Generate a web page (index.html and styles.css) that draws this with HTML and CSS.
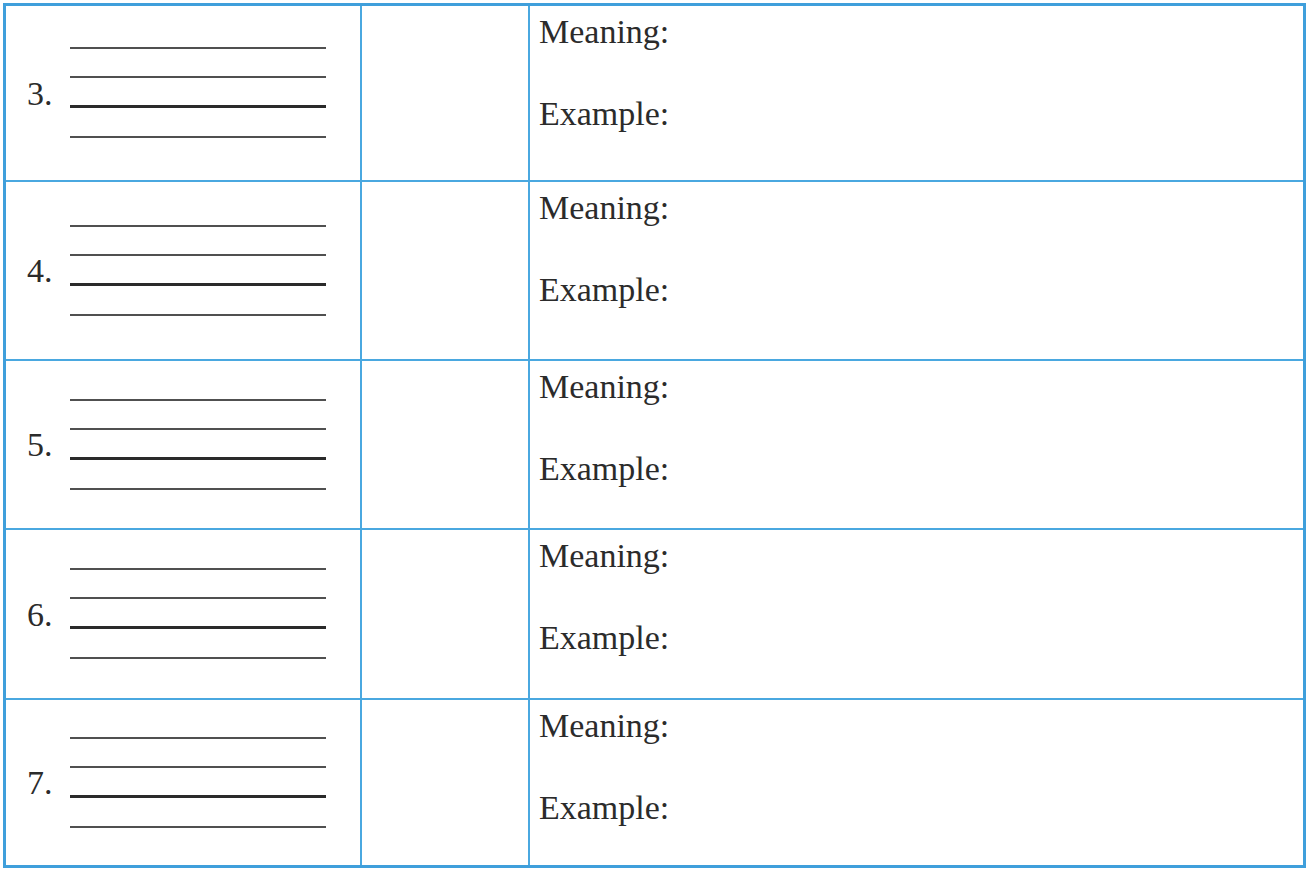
FILE: index.html
```html
<!DOCTYPE html>
<html lang="en">
<head>
<meta charset="utf-8">
<title>Vocabulary worksheet</title>
<link rel="stylesheet" href="styles.css">
</head>
<body>
<div class="sheet">
  <div class="row r3">
    <div class="cell word">
      <span class="num">3.</span>
      <div class="rules"><i class="rule"></i><i class="rule"></i><i class="rule base"></i><i class="rule"></i></div>
    </div>
    <div class="cell blank"></div>
    <div class="cell info"><div class="label">Meaning:</div><div class="label ex">Example:</div></div>
  </div>
  <div class="row r4">
    <div class="cell word">
      <span class="num">4.</span>
      <div class="rules"><i class="rule"></i><i class="rule"></i><i class="rule base"></i><i class="rule"></i></div>
    </div>
    <div class="cell blank"></div>
    <div class="cell info"><div class="label">Meaning:</div><div class="label ex">Example:</div></div>
  </div>
  <div class="row r5">
    <div class="cell word">
      <span class="num">5.</span>
      <div class="rules"><i class="rule"></i><i class="rule"></i><i class="rule base"></i><i class="rule"></i></div>
    </div>
    <div class="cell blank"></div>
    <div class="cell info"><div class="label">Meaning:</div><div class="label ex">Example:</div></div>
  </div>
  <div class="row r6">
    <div class="cell word">
      <span class="num">6.</span>
      <div class="rules"><i class="rule"></i><i class="rule"></i><i class="rule base"></i><i class="rule"></i></div>
    </div>
    <div class="cell blank"></div>
    <div class="cell info"><div class="label">Meaning:</div><div class="label ex">Example:</div></div>
  </div>
  <div class="row r7">
    <div class="cell word">
      <span class="num">7.</span>
      <div class="rules"><i class="rule"></i><i class="rule"></i><i class="rule base"></i><i class="rule"></i></div>
    </div>
    <div class="cell blank"></div>
    <div class="cell info"><div class="label">Meaning:</div><div class="label ex">Example:</div></div>
  </div>
</div>
</body>
</html>
```
FILE: styles.css
```css
* { box-sizing: border-box; }

html, body {
  margin: 0;
  padding: 0;
  background: #ffffff;
}

body {
  font-family: "Liberation Serif", "Times New Roman", serif;
  color: #2b2b2b;
}

.sheet {
  margin: 3px 0 0 3px;
  width: 1303px;
  height: 865px;
  border: 3px solid #3f9fdb;
  display: flex;
  flex-direction: column;
}

.row {
  display: grid;
  grid-template-columns: 356px 168px 1fr;
  border-bottom: 2px solid #4aa8e0;
}

.row.r3 { height: 176px; }
.row.r4 { height: 179px; }
.row.r5 { height: 169px; }
.row.r6 { height: 170px; }
.row.r7 { height: 165px; border-bottom: none; flex: 1; }

.cell {
  border-right: 2px solid #4aa8e0;
}

.cell.info { border-right: none; }

.word {
  display: flex;
  align-items: center;
  padding-left: 21px;
}

.num {
  align-self: center;
  width: 43px;
  font-size: 34px;
  line-height: 34px;
  margin-top: 1px;
}

.rules {
  width: 256px;
  display: flex;
  flex-direction: column;
  gap: 27px;
  margin-top: -1px;
}

.rule {
  display: block;
  height: 2px;
  background: #505050;
}

.rule.base {
  height: 3px;
  background: #2a2a2a;
}

.rule.base + .rule {
  margin-top: 1px;
}

.info {
  padding: 6px 0 0 9px;
}

.label {
  font-size: 34px;
  line-height: 40px;
  white-space: nowrap;
}

.label.ex {
  margin-top: 42px;
}
```
